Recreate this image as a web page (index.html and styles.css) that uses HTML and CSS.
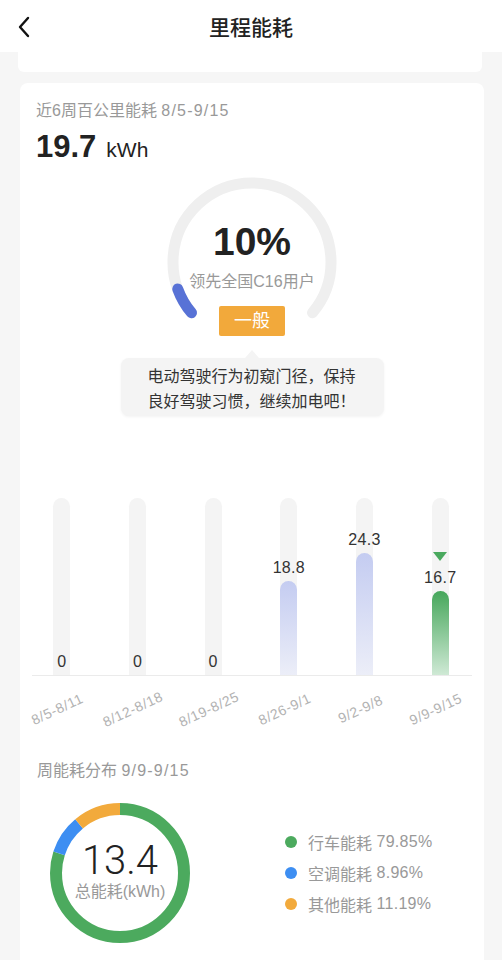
FILE: index.html
```html
<!DOCTYPE html>
<html lang="zh-CN">
<head>
<meta charset="utf-8">
<title>里程能耗</title>
<link rel="stylesheet" href="styles.css">
</head>
<body>
<header class="nav">
  <svg class="nav-back" width="14" height="22" viewBox="0 0 14 22"><path d="M11 2 L3 11 L11 20" fill="none" stroke="#111" stroke-width="2.4" stroke-linecap="round" stroke-linejoin="round"/></svg>
  <h1 class="nav-title">里程能耗</h1>
</header>

<main class="page">
  <div class="card card-prev"></div>

  <section class="card card-main">
    <div class="summary">
      <div class="summary-title">近6周百公里能耗 <span class="date">8/5-9/15</span></div>
      <div class="summary-value"><span class="big-num">19.7</span><span class="unit">kWh</span></div>
    </div>

    <div class="gauge">
      <svg class="gauge-ring" width="180" height="180" viewBox="0 0 180 180">
        <path d="M29.49 140.78 A79 79 0 1 1 150.51 140.78" fill="none" stroke="#efefef" stroke-width="11" stroke-linecap="round"/>
        <path d="M29.49 140.78 A79 79 0 0 1 15.76 117.02" fill="none" stroke="#5872d6" stroke-width="11" stroke-linecap="round"/>
      </svg>
      <div class="gauge-pct">10%</div>
      <div class="gauge-sub">领先全国C16用户</div>
      <div class="gauge-badge">一般</div>
    </div>

    <div class="tip">电动驾驶行为初窥门径，保持<br>良好驾驶习惯，继续加电吧！</div>

    <div class="chart">
      <div class="bars">
        <div class="col" style="--h:0px"><div class="track"><div class="fill fill-blue"></div></div><span class="val">0</span></div>
        <div class="col" style="--h:0px"><div class="track"><div class="fill fill-blue"></div></div><span class="val">0</span></div>
        <div class="col" style="--h:0px"><div class="track"><div class="fill fill-blue"></div></div><span class="val">0</span></div>
        <div class="col" style="--h:94px"><div class="track"><div class="fill fill-blue"></div></div><span class="val">18.8</span></div>
        <div class="col" style="--h:122px"><div class="track"><div class="fill fill-blue"></div></div><span class="val">24.3</span></div>
        <div class="col" style="--h:84px"><div class="track"><div class="fill fill-green"></div></div><span class="val">16.7</span><span class="marker"></span></div>
      </div>
      <div class="axis"></div>
      <div class="xlabels">
        <div class="xl"><span>8/5-8/11</span></div>
        <div class="xl"><span>8/12-8/18</span></div>
        <div class="xl"><span>8/19-8/25</span></div>
        <div class="xl"><span>8/26-9/1</span></div>
        <div class="xl"><span>9/2-9/8</span></div>
        <div class="xl"><span>9/9-9/15</span></div>
      </div>
    </div>

    <div class="dist">
      <div class="dist-title">周能耗分布 <span class="date">9/9-9/15</span></div>
      <div class="dist-row">
        <div class="donut">
          <svg class="donut-ring" width="140" height="140" viewBox="0 0 140 140">
            <g transform="rotate(-90 70 70)">
              <circle cx="70" cy="70" r="64" fill="none" stroke="#4caa5e" stroke-width="12" stroke-dasharray="321.1 402.12" stroke-dashoffset="0"/>
              <circle cx="70" cy="70" r="64" fill="none" stroke="#3d8ef2" stroke-width="12" stroke-dasharray="36.03 402.12" stroke-dashoffset="-321.1"/>
              <circle cx="70" cy="70" r="64" fill="none" stroke="#f2aa3c" stroke-width="12" stroke-dasharray="45.0 402.12" stroke-dashoffset="-357.13"/>
            </g>
          </svg>
          <div class="donut-num">13.4</div>
          <div class="donut-sub">总能耗(kWh)</div>
        </div>
        <ul class="legend">
          <li><i class="dot dot-green"></i>行车能耗 <span class="pct">79.85%</span></li>
          <li><i class="dot dot-blue"></i>空调能耗 <span class="pct">8.96%</span></li>
          <li><i class="dot dot-orange"></i>其他能耗 <span class="pct">11.19%</span></li>
        </ul>
      </div>
    </div>
  </section>
</main>
</body>
</html>
```

FILE: styles.css
```css
* { box-sizing: border-box; }

html, body {
  margin: 0;
  padding: 0;
}

body {
  width: 502px;
  height: 960px;
  overflow: hidden;
  background: #f6f6f6;
  font-family: "Liberation Sans", "Noto Sans CJK SC", sans-serif;
  color: #333;
}

.nav {
  position: relative;
  height: 52px;
  background: #fff;
  display: flex;
  align-items: center;
  justify-content: center;
}

.nav-back {
  position: absolute;
  left: 17px;
  top: 16px;
}

.nav-title {
  margin: 0;
  font-size: 21px;
  font-weight: 500;
  color: #222;
  line-height: 52px;
  padding-top: 3px;
}

.page {
  display: flex;
  flex-direction: column;
}

.card {
  background: #fff;
  margin: 0 18px 0 20px;
}

.card-prev {
  height: 20px;
  margin-left: 18px;
  margin-right: 20px;
  border-radius: 0 0 6px 6px;
}

.card-main {
  margin-top: 11px;
  border-radius: 8px;
  padding-bottom: 30px;
}

.date {
  letter-spacing: 1.2px;
}

/* summary */
.summary {
  padding: 18px 16px 0 16px;
}

.summary-title {
  font-size: 16px;
  line-height: 20px;
  color: #999;
}

.summary-value {
  margin-top: 4px;
  display: flex;
  align-items: baseline;
  gap: 10px;
  line-height: 44px;
  color: #222;
}

.big-num {
  font-size: 31px;
  font-weight: bold;
}

.unit {
  font-size: 21px;
}

/* gauge */
.gauge {
  position: relative;
  width: 180px;
  margin: 0 auto;
  padding-top: 47px;
  display: flex;
  flex-direction: column;
  align-items: center;
}

.gauge-ring {
  position: absolute;
  left: 0;
  top: 0;
}

.gauge-pct {
  position: relative;
  font-size: 39px;
  font-weight: bold;
  line-height: 46px;
  color: #222;
}

.gauge-sub {
  position: relative;
  margin-top: 6px;
  font-size: 16px;
  line-height: 22px;
  color: #999;
}

.gauge-badge {
  position: relative;
  margin-top: 13px;
  width: 66px;
  height: 30px;
  background: #f2a93b;
  border-radius: 2px;
  color: #fff;
  font-size: 18px;
  line-height: 30px;
  text-align: center;
}

/* tooltip */
.tip {
  position: relative;
  width: 263px;
  margin: 22px auto 0;
  padding: 6px 0 2px 27px;
  background: #f4f4f4;
  border-radius: 8px;
  box-shadow: 0 1px 3px rgba(0, 0, 0, 0.05);
  font-size: 16px;
  line-height: 25px;
  color: #333;
}

.tip::before {
  content: "";
  position: absolute;
  left: 124px;
  top: -8px;
  border-left: 7px solid transparent;
  border-right: 7px solid transparent;
  border-bottom: 8px solid #f4f4f4;
}

/* chart */
.chart {
  margin: 82px 6px 0 4px;
}

.bars {
  display: flex;
  height: 177px;
}

.col {
  position: relative;
  flex: 1;
  display: flex;
  justify-content: center;
}

.track {
  position: relative;
  width: 17px;
  height: 177px;
  background: #f4f4f4;
  border-radius: 8.5px 8.5px 0 0;
  overflow: hidden;
}

.fill {
  position: absolute;
  left: 0;
  right: 0;
  bottom: 0;
  height: var(--h);
  border-radius: 8.5px 8.5px 0 0;
}

.fill-blue {
  background: linear-gradient(to bottom, #c4ccf1, #eceef8);
}

.fill-green {
  background: linear-gradient(to bottom, #46a75b, #cfe9d5);
}

.val {
  position: absolute;
  left: 0;
  right: 0;
  bottom: calc(var(--h) + 5px);
  text-align: center;
  font-size: 16px;
  line-height: 17px;
  letter-spacing: 0.3px;
  color: #333;
}

.marker {
  position: absolute;
  left: 50%;
  margin-left: -7px;
  bottom: calc(var(--h) + 30px);
  border-left: 7px solid transparent;
  border-right: 7px solid transparent;
  border-top: 9px solid #4aa95e;
}

.axis {
  height: 1px;
  margin: 0 6px 0 8px;
  background: #ebebeb;
}

.xlabels {
  display: flex;
  height: 62px;
}

.xl {
  flex: 1;
  display: flex;
  justify-content: center;
  padding-top: 23px;
}

.xl span {
  display: block;
  white-space: nowrap;
  font-size: 14px;
  line-height: 18px;
  letter-spacing: 0.6px;
  color: #b3b3b3;
  transform: rotate(-25deg);
}

/* distribution */
.dist {
  padding: 23px 0 0 17px;
}

.dist-title {
  font-size: 16px;
  line-height: 20px;
  color: #999;
}

.dist-row {
  margin-top: 22px;
  display: flex;
  align-items: center;
}

.donut {
  position: relative;
  width: 140px;
  height: 140px;
  margin-left: 13px;
  display: flex;
  flex-direction: column;
  align-items: center;
  justify-content: center;
}

.donut-ring {
  position: absolute;
  left: 0;
  top: 0;
}

.donut-num {
  position: relative;
  font-family: "Roboto", sans-serif;
  font-weight: 300;
  font-size: 40px;
  line-height: 42px;
  color: #222;
  margin-top: -4px;
}

.donut-sub {
  position: relative;
  font-size: 16px;
  line-height: 20px;
  color: #999;
}

.legend {
  list-style: none;
  margin: 0 0 0 95px;
  padding: 0;
}

.legend li {
  display: flex;
  align-items: center;
  height: 31px;
  font-size: 16px;
  color: #999;
  white-space: pre;
}

.pct {
  letter-spacing: 0.3px;
}

.dot {
  width: 12px;
  height: 12px;
  border-radius: 50%;
  margin-right: 11px;
}

.dot-green { background: #4caa5e; }
.dot-blue { background: #3d8ef2; }
.dot-orange { background: #f2aa3c; }
```
